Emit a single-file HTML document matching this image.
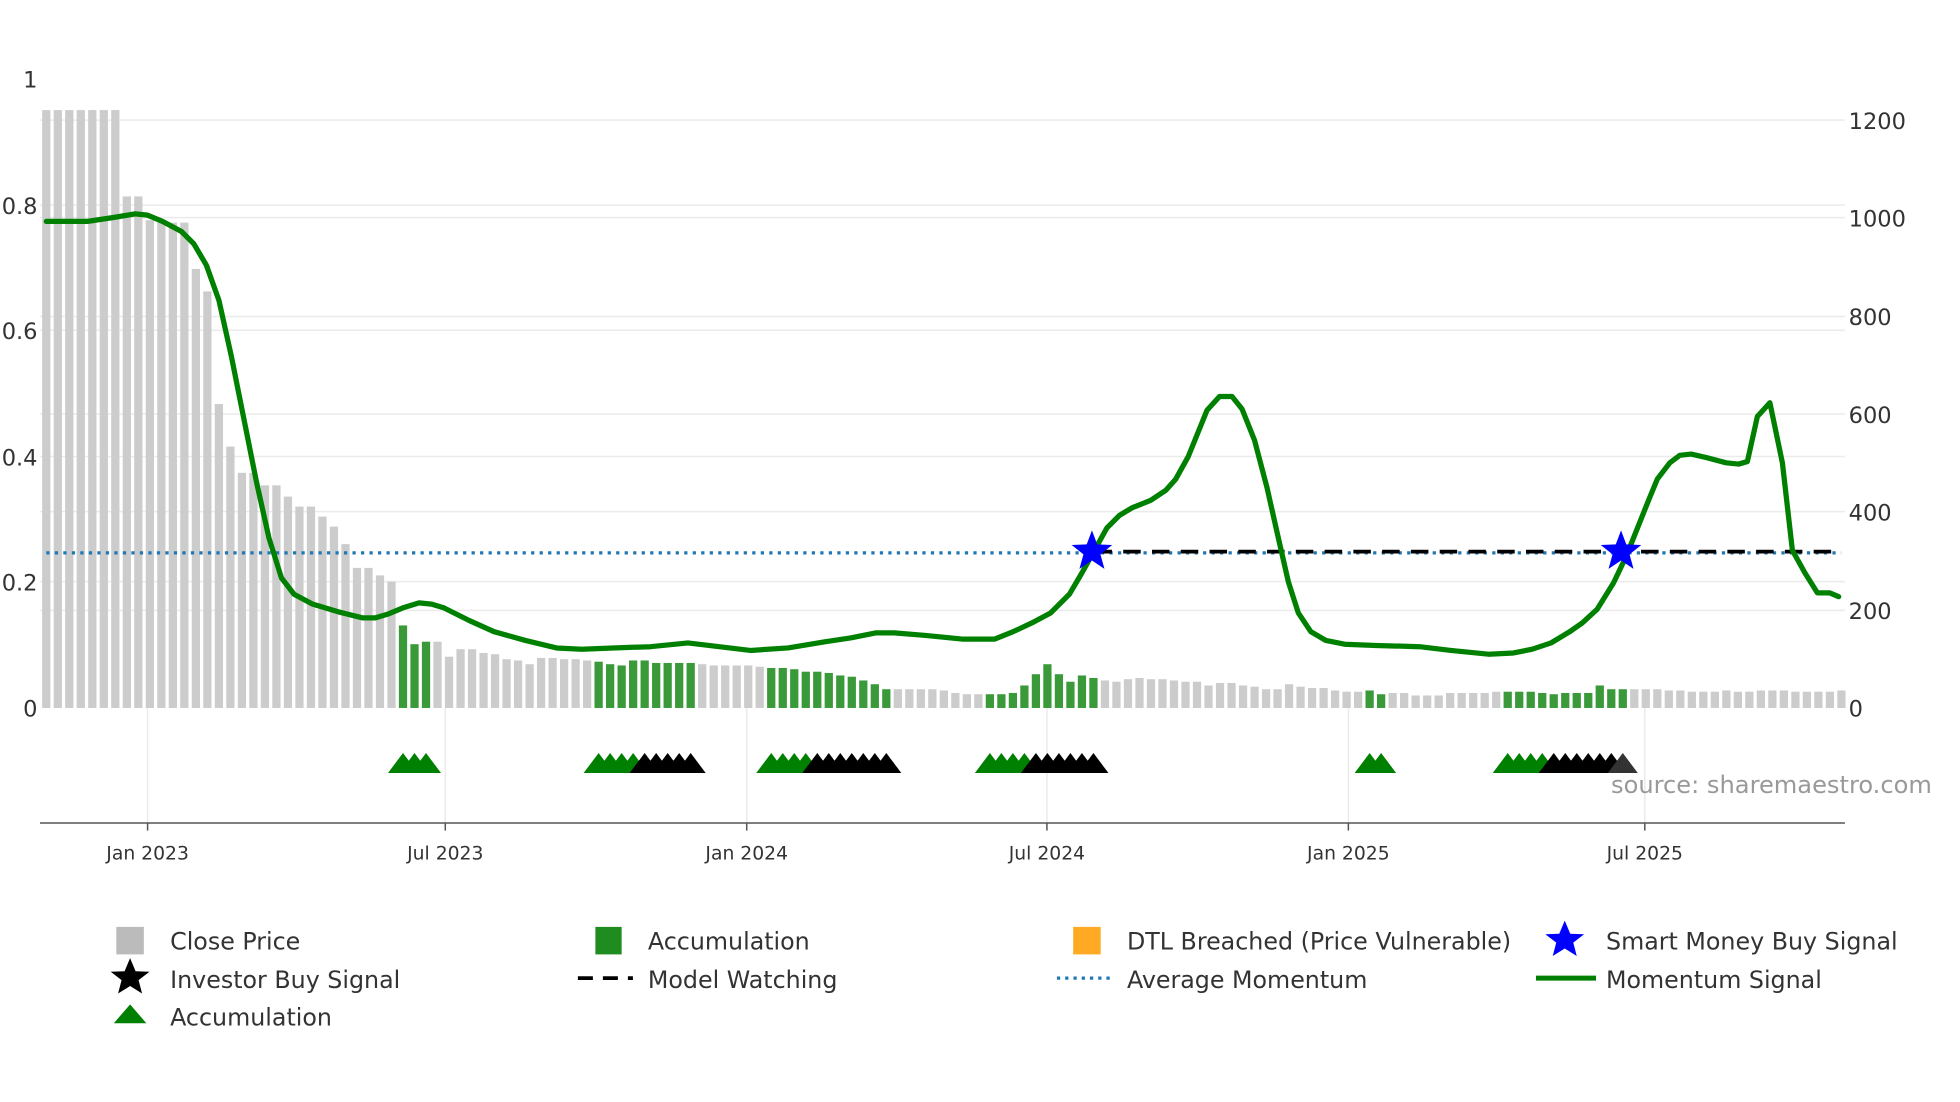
<!DOCTYPE html>
<html><head><meta charset="utf-8"><style>
html,body{margin:0;padding:0;background:#fff;}
svg{display:block;}
text{font-family:"DejaVu Sans","Liberation Sans",sans-serif;fill:#333;}
</style></head><body>
<svg id="c" width="1960" height="1102" viewBox="0 0 1567 881" preserveAspectRatio="none" xmlns="http://www.w3.org/2000/svg">
<g stroke="#ebebeb" stroke-width="1.2">
<line x1="32" x2="1475" y1="96" y2="96"/><line x1="32" x2="1475" y1="174" y2="174"/><line x1="32" x2="1475" y1="253" y2="253"/><line x1="32" x2="1475" y1="331" y2="331"/><line x1="32" x2="1475" y1="409" y2="409"/><line x1="32" x2="1475" y1="488" y2="488"/>
<line x1="32" x2="1475" y1="164" y2="164"/><line x1="32" x2="1475" y1="264" y2="264"/><line x1="32" x2="1475" y1="365" y2="365"/><line x1="32" x2="1475" y1="465" y2="465"/>
<line x1="118" x2="118" y1="566" y2="658"/><line x1="356" x2="356" y1="566" y2="658"/><line x1="597" x2="597" y1="566" y2="658"/><line x1="837" x2="837" y1="566" y2="658"/><line x1="1078" x2="1078" y1="566" y2="658"/><line x1="1315" x2="1315" y1="566" y2="658"/>
</g>
<g id="bars"></g>
<line x1="37" x2="1472" y1="442" y2="442" stroke="#1f77b4" stroke-width="2.6" stroke-dasharray="2.6 4.2"/>
<line x1="875" x2="1472" y1="441" y2="441" stroke="#000" stroke-width="3" stroke-dasharray="14 9"/>
<polyline fill="none" stroke="#008000" stroke-width="4.2" stroke-linejoin="round" stroke-linecap="round" points="37,177 70,177 90,174 108,171 118,172 130,177 145,185 155,195 165,212 175,240 185,285 195,335 205,385 215,430 225,462 235,475 250,483 270,489 290,494 300,494 310,491 322,486 335,482 345,483 355,486 375,496 395,505 420,512 445,518 465,519 490,518 520,517 550,514 575,517 600,520 630,518 660,513 680,510 700,506 715,506 740,508 770,511 795,511 810,505 825,498 840,490 855,475 865,458 875,440 885,422 895,412 905,406 920,400 932,392 940,383 950,365 965,328 975,317 985,317 993,327 1003,352 1013,390 1022,430 1030,465 1038,490 1048,505 1060,512 1075,515 1100,516 1135,517 1160,520 1190,523 1210,522 1225,519 1240,514 1255,505 1265,498 1277,487 1290,466 1300,445 1310,420 1318,400 1325,383 1335,370 1343,364 1352,363 1365,366 1380,370 1390,371 1397,369 1405,333 1415,322 1425,370 1433,440 1443,458 1453,474 1463,474 1470,477"/>
<g id="tri"></g>
<g id="stars"></g>
<line x1="32" x2="1475" y1="658" y2="658" stroke="#555" stroke-width="1.2"/>
<g stroke="#555" stroke-width="1.2"><line x1="118" x2="118" y1="658" y2="664"/><line x1="356" x2="356" y1="658" y2="664"/><line x1="597" x2="597" y1="658" y2="664"/><line x1="837" x2="837" y1="658" y2="664"/><line x1="1078" x2="1078" y1="658" y2="664"/><line x1="1315" x2="1315" y1="658" y2="664"/></g>
<g font-size="15" text-anchor="middle">
<text x="118" y="687">Jan 2023</text><text x="356" y="687">Jul 2023</text><text x="597" y="687">Jan 2024</text><text x="837" y="687">Jul 2024</text><text x="1078" y="687">Jan 2025</text><text x="1315" y="687">Jul 2025</text>
</g>
<g font-size="18" text-anchor="end">
<text x="30" y="70">1</text><text x="30" y="171">0.8</text><text x="30" y="271">0.6</text><text x="30" y="372">0.4</text><text x="30" y="472">0.2</text><text x="30" y="573">0</text>
</g>
<g font-size="18">
<text x="1478" y="103">1200</text><text x="1478" y="181">1000</text><text x="1478" y="260">800</text><text x="1478" y="338">600</text><text x="1478" y="416">400</text><text x="1478" y="495">200</text><text x="1478" y="573">0</text>
</g>
<text x="1288" y="634" font-size="19.3" style="fill:#999">source: sharemaestro.com</text>
<g font-size="19">
<rect x="93" y="741" width="22" height="22" fill="#bbbbbb"/><text x="136" y="759">Close Price</text>
<rect x="476" y="741" width="21" height="22" fill="#1f8c1f"/><text x="518" y="759">Accumulation</text>
<rect x="858" y="741" width="22" height="22" fill="#ffaa22"/><text x="901" y="759">DTL Breached (Price Vulnerable)</text>
<polygon fill="#0000ff" points="1251,736 1255.4,746.5 1266.5,746.9 1257.8,753.6 1260.6,764.3 1251,758.3 1241.4,764.3 1244.2,753.6 1235.5,746.9 1246.6,746.5"/><text x="1284" y="759">Smart Money Buy Signal</text>
<polygon fill="#000" points="104,766 108.4,776.5 119.5,776.9 110.8,783.6 113.6,794.3 104,788.3 94.4,794.3 97.2,783.6 88.5,776.9 99.6,776.5"/><text x="136" y="790">Investor Buy Signal</text>
<line x1="462" x2="506" y1="782" y2="782" stroke="#000" stroke-width="3" stroke-dasharray="12 8"/><text x="518" y="790">Model Watching</text>
<line x1="845" x2="890" y1="782" y2="782" stroke="#1f77b4" stroke-width="2.6" stroke-dasharray="2.6 4"/><text x="901" y="790">Average Momentum</text>
<line x1="1228" x2="1276" y1="782" y2="782" stroke="#008000" stroke-width="4"/><text x="1284" y="790">Momentum Signal</text>
<polygon fill="#008000" points="104,803 117,818 91,818"/><text x="136" y="820">Accumulation</text>
</g>
</svg>
<script>
var tops=[88,88,88,88,88,88,88,157,157,176,178,178,178,215,233,323,357,378,378,388,388,397,405,405,413,421,435,454,454,460,465,
500,515,513,
513,525,519,519,522,523,527,528,531,526,526,527,527,528,
529,531,532,528,528,530,530,530,530,
531,532,532,532,532,533,
534,534,535,537,537,538,540,541,544,547,551,
551,551,551,551,552,554,555,555,
555,555,554,548,539,531,539,545,540,542,
544,545,543,542,543,543,544,545,545,548,546,546,548,549,551,551,547,549,550,550,552,553,553,
552,555,
554,554,556,556,556,554,554,554,554,553,
553,553,553,554,555,554,554,554,548,551,551,
551,551,551,552,552,553,553,553,552,553,553,552,552,552,553,553,553,553,552];
function green(i){return (i>=31&&i<=33)||(i>=48&&i<=56)||(i>=63&&i<=73)||(i>=82&&i<=91)||(i>=115&&i<=116)||(i>=127&&i<=137);}
var b=document.getElementById("bars"),h="";
for(var i=0;i<tops.length;i++){var x=37+9.2*i;h+='<rect x="'+(x-3.3).toFixed(1)+'" y="'+tops[i]+'" width="6.6" height="'+(566-tops[i])+'" fill="'+(green(i)?"#3a9a3a":"#cccccc")+'"/>';}
b.innerHTML=h;
var t="";
function tri(i,c){var x=37+9.2*i;t+='<polygon points="'+(x-12)+',618 '+x+',602 '+(x+12)+',618" fill="'+c+'"/>';}
var groups=[[31,33,"#008000"],[48,51,"#008000"],[52,56,"#000"],[63,66,"#008000"],[67,73,"#000"],[82,85,"#008000"],[86,91,"#000"],[115,116,"#008000"],[127,130,"#008000"],[131,136,"#000"],[137,137,"#333"]];
groups.forEach(function(g){for(var k=g[0];k<=g[1];k++)tri(k,g[2]);});
document.getElementById("tri").innerHTML=t;
function star(cx,cy,R){var p=[];for(var k=0;k<10;k++){var r=k%2?R*0.42:R,a=-Math.PI/2+k*Math.PI/5;p.push((cx+r*Math.cos(a)).toFixed(1)+","+(cy+r*Math.sin(a)).toFixed(1));}return '<polygon fill="#0000ff" points="'+p.join(" ")+'"/>';}
document.getElementById("stars").innerHTML=star(873,441,17)+star(1296,441,17);
</script>
</body></html>
